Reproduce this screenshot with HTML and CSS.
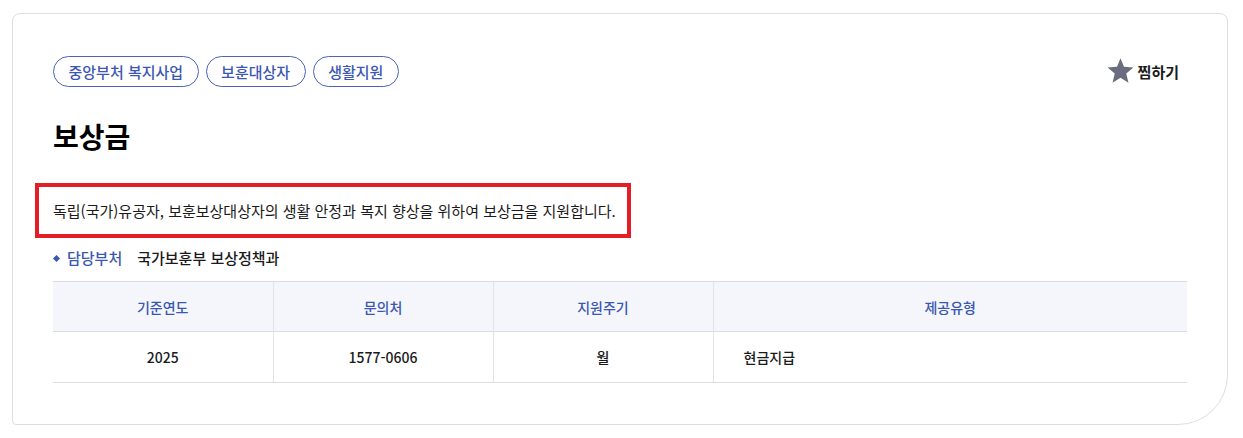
FILE: index.html
```html
<!DOCTYPE html>
<html lang="ko">
<head>
<meta charset="utf-8">
<title>보상금</title>
<link rel="stylesheet" href="styles.css">
</head>
<body>
<div class="card">
  <div class="top-row">
    <ul class="tags">
      <li class="tag">중앙부처 복지사업</li>
      <li class="tag">보훈대상자</li>
      <li class="tag">생활지원</li>
    </ul>
    <button class="fav" type="button">
      <svg class="star" viewBox="0 0 24 24" width="27" height="27" aria-hidden="true">
        <path d="M12 1l3.1 7.7 8.4.6-6.4 5.4 2 8.2L12 18.4l-7.1 4.5 2-8.2L.5 9.3l8.4-.6z" fill="#6a6c80"/>
      </svg>
      <span>찜하기</span>
    </button>
  </div>
  <h1 class="title">보상금</h1>
  <p class="desc">독립(국가)유공자, 보훈보상대상자의 생활 안정과 복지 향상을 위하여 보상금을 지원합니다.</p>
  <div class="dept">
    <span class="dept-label">담당부처</span>
    <span class="dept-value">국가보훈부 보상정책과</span>
  </div>
  <table class="info">
    <thead>
      <tr>
        <th class="c1">기준연도</th>
        <th class="c2">문의처</th>
        <th class="c3">지원주기</th>
        <th class="c4">제공유형</th>
      </tr>
    </thead>
    <tbody>
      <tr>
        <td>2025</td>
        <td>1577-0606</td>
        <td>월</td>
        <td class="left">현금지급</td>
      </tr>
    </tbody>
  </table>
</div>
</body>
</html>
```

FILE: styles.css
```css
* { box-sizing: border-box; }
html, body { margin: 0; padding: 0; background: #fff; }
body {
  font-family: "Noto Sans CJK KR", "Noto Sans", sans-serif;
  color: #111;
  padding: 13px 15px 13px 12px;
}
.card {
  width: 1216px;
  height: 412px;
  border: 1px solid #dedede;
  border-radius: 8px 8px 50px 4px;
  padding: 42px 39px 0 40px;
}
.top-row {
  display: flex;
  justify-content: space-between;
  align-items: center;
}
.tags {
  display: flex;
  gap: 7px;
  list-style: none;
  margin: 0;
  padding: 0;
}
.tag {
  height: 31px;
  line-height: 29px;
  padding: 0 14.5px;
  border: 1px solid #4b64b6;
  border-radius: 16px;
  color: #3b57b2;
  font-size: 15px;
  font-weight: 500;
}
.fav {
  display: flex;
  align-items: center;
  gap: 4px;
  border: 0;
  background: none;
  padding: 0;
  margin-right: 9px;
  font-family: inherit;
  font-size: 15px;
  font-weight: 700;
  color: #1b1b1b;
}
.fav .star { margin-top: -3px; }
.title {
  margin: 30px 0 0;
  font-size: 28px;
  line-height: 39px;
  font-weight: 700;
  color: #000;
}
.desc {
  width: fit-content;
  margin: 27px 0 0 -18px;
  padding: 0 11px 0 14px;
  height: 55px;
  line-height: 47px;
  border: 4px solid #e31e26;
  font-size: 15px;
  color: #1a1a1a;
}
.dept {
  display: flex;
  align-items: center;
  gap: 15px;
  margin-top: 10px;
  font-size: 15px;
  line-height: 20px;
  font-weight: 500;
}
.dept-label {
  position: relative;
  padding-left: 14px;
  color: #3b57b2;
}
.dept-label::before {
  content: "";
  position: absolute;
  left: 1px;
  top: 8px;
  width: 5px;
  height: 5px;
  background: #3b57b2;
  transform: rotate(45deg);
}
.dept-value { color: #1a1a1a; }
.info {
  width: 1134px;
  margin-top: 13px;
  border-collapse: collapse;
  font-size: 14px;
  font-weight: 500;
}
.info th, .info td {
  text-align: center;
  border-left: 1px solid #e3e3e3;
}
.info th:first-child, .info td:first-child { border-left: 0; }
.info thead tr { border-top: 1px solid #dcdde2; border-bottom: 1px solid #dcdde2; }
.info th {
  height: 50px;
  background: #f4f6fb;
  color: #3b57b2;
  font-weight: 500;
}
.info td {
  height: 51px;
  color: #1a1a1a;
  border-bottom: 1px solid #dcdde2;
}
.info .left { text-align: left; padding-left: 30px; }
.c1, .c2, .c3 { width: 220px; }
```
